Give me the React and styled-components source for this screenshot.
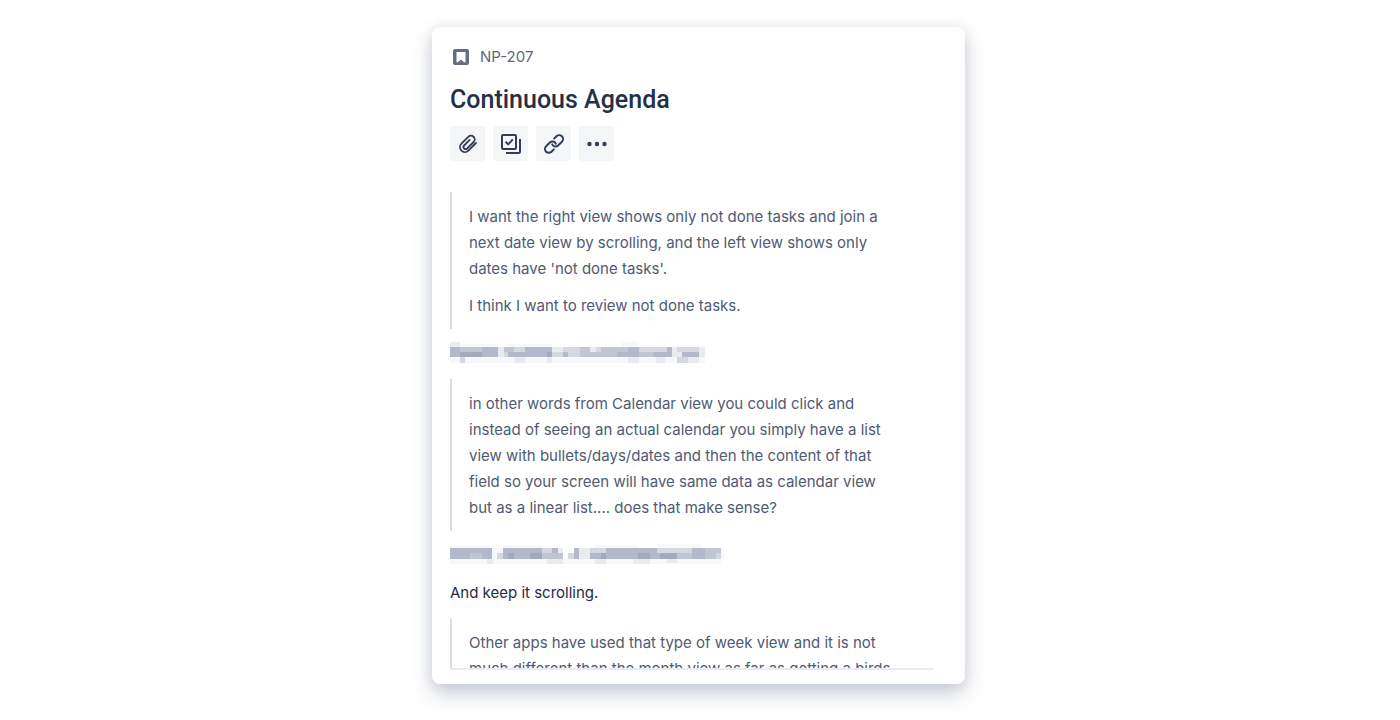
import React from 'react';
import styled, { createGlobalStyle } from 'styled-components';

const GlobalStyle = createGlobalStyle`
  * { box-sizing: border-box; }
  body {
    margin: 0;
    background: #fff;
    color: #1f2a47;
    font-family: Inter, "Liberation Sans", sans-serif;
  }
`;

const Page = styled.main`
  display: flex;
  justify-content: center;
  padding: 27px 3px 36px 0;
`;

const Card = styled.article`
  width: 100%;
  max-width: 533px;
  padding: 17px 31px 14px 18px;
  border-radius: 8px;
  background: #fff;
  box-shadow: 0 10px 20px rgba(23, 43, 77, 0.22), 0 0 14px rgba(23, 43, 77, 0.08);
`;

const IssueKey = styled.a`
  display: flex;
  align-items: center;
  gap: 11px;
  padding-left: 3px;
  color: #5e6780;
  font-size: 15px;
  line-height: 25px;
  text-decoration: none;
`;

const Title = styled.h1`
  margin: 14px 0 10px;
  color: #253048;
  font-family: Roboto, Inter, sans-serif;
  font-size: 25px;
  font-weight: 500;
  line-height: 33px;
`;

const Toolbar = styled.div`
  display: flex;
  gap: 8px;
  margin-bottom: 31px;
`;

const ToolButton = styled.button`
  display: grid;
  place-items: center;
  width: 35px;
  height: 35px;
  padding: 0;
  border: 0;
  border-radius: 3px;
  background: #f5f6f8;
  color: #343d56;
`;

const Description = styled.section`
  max-height: 478px;
  overflow: hidden;
  border-bottom: 2px solid #e9ebee;
`;

const Paragraph = styled.p`
  margin: 0;
  font-size: 15px;
  line-height: 26px;

  & + &, svg + & { margin-top: 11px; }
`;

const Quote = styled.blockquote`
  margin: 12px 0;
  padding: 12px 17px 10px;
  border-left: 2px solid #d9dce2;
  color: #505a73;

  &:first-child { margin-top: 0; }
`;

const Mosaic = styled.svg`
  display: block;
  width: 280px;
  height: 26px;
`;

const SHADES = ['#f7f8fa', '#e9ebef', '#d5d8df', '#c2c6d3', '#b3b8ca', '#a5aabb'];

/* Each tile is [x, y, width, height, shade]. */
const FIRST_NAME = [
  [24, 22, 36, 14, 1], [60, 27, 110, 9, 0], [205, 27, 130, 9, 0], [545, 22, 50, 14, 0],
  [26, 36, 34, 31, 4], [60, 36, 66, 15, 3], [126, 36, 48, 31, 4], [60, 51, 66, 16, 5],
  [174, 36, 17, 31, 1], [191, 36, 31, 15, 3], [191, 51, 14, 16, 2], [205, 51, 50, 16, 4],
  [222, 36, 33, 15, 2], [255, 36, 81, 31, 4], [320, 51, 16, 16, 5], [336, 36, 33, 15, 1],
  [336, 51, 33, 16, 2], [369, 36, 50, 15, 2], [369, 51, 15, 16, 4], [384, 51, 35, 16, 2],
  [419, 36, 31, 15, 3], [450, 36, 18, 15, 1], [419, 51, 65, 16, 3], [468, 36, 15, 15, 2],
  [483, 36, 48, 31, 3], [531, 36, 66, 15, 3], [531, 51, 66, 16, 4], [565, 36, 32, 15, 4],
  [597, 36, 83, 15, 2], [597, 51, 43, 16, 3], [640, 51, 56, 16, 4], [680, 36, 16, 15, 4],
  [696, 36, 16, 15, 1], [696, 51, 30, 16, 1], [712, 36, 14, 15, 2], [726, 36, 51, 15, 2],
  [726, 51, 51, 16, 4], [777, 36, 17, 31, 1],
  [26, 67, 768, 16, 0], [60, 67, 15, 16, 2], [222, 67, 33, 16, 1], [320, 67, 16, 16, 1],
  [565, 67, 32, 16, 1], [648, 67, 28, 16, 1], [712, 67, 32, 16, 2], [744, 67, 33, 16, 1],
];

const SECOND_NAME = [
  [26, 18, 130, 6, 0], [190, 15, 116, 9, 0], [465, 15, 130, 9, 0], [650, 12, 140, 12, 0],
  [27, 24, 129, 33, 4], [90, 40, 35, 17, 3], [156, 24, 33, 33, 0], [172, 40, 18, 17, 2],
  [189, 24, 117, 16, 4], [189, 40, 15, 17, 4], [204, 40, 18, 17, 5], [222, 40, 84, 17, 4],
  [270, 40, 36, 17, 5], [306, 24, 29, 16, 2], [335, 24, 20, 16, 4], [355, 24, 14, 16, 1],
  [306, 40, 63, 17, 3], [385, 40, 17, 17, 2], [402, 24, 15, 33, 4], [417, 24, 33, 33, 1],
  [450, 24, 48, 16, 2], [450, 40, 32, 17, 4], [482, 40, 16, 17, 5], [498, 24, 132, 33, 4],
  [595, 40, 35, 17, 5], [630, 24, 20, 16, 4], [650, 24, 60, 16, 2], [630, 40, 80, 17, 4],
  [660, 40, 50, 17, 5], [710, 24, 45, 16, 2], [710, 40, 133, 17, 3], [755, 24, 40, 33, 4],
  [795, 24, 48, 16, 3], [827, 40, 16, 17, 2], [843, 24, 9, 33, 0],
  [27, 57, 816, 16, 0], [141, 57, 18, 16, 1], [320, 57, 49, 14, 1], [465, 57, 33, 16, 1],
  [580, 57, 50, 14, 1], [680, 57, 30, 12, 1],
];

function HiddenName({ tiles, top }) {
  return (
    <Mosaic viewBox={`30 ${top} 840 78`} overflow="visible" shapeRendering="crispEdges" aria-hidden="true">
      {tiles.map(([x, y, w, h, shade], i) => (
        <rect key={i} x={x} y={y} width={w} height={h} fill={SHADES[shade]} />
      ))}
    </Mosaic>
  );
}

const StoryIcon = () => (
  <svg width="16" height="16" viewBox="0 0 16 16" aria-hidden="true">
    <rect width="16" height="16" rx="2" fill="#656d82" />
    <path d="M3.500 3h9v10.200h-1.500L8 10.400 5 13.200H3.500z" fill="#fff" />
  </svg>
);

const iconProps = {
  width: 24,
  height: 24,
  viewBox: '0 0 24 24',
  fill: 'none',
  stroke: 'currentColor',
  strokeWidth: 2,
  strokeLinecap: 'round',
  strokeLinejoin: 'round',
  'aria-hidden': true,
};

const ClipIcon = () => (
  <svg {...iconProps} strokeWidth="1.8">
    <path d="M20 11l-7.600 7.600a4.900 4.900 0 0 1-7-6.900l6.900-6.900a3.700 3.700 0 0 1 5.300 5.200l-6.500 6.500a2.100 2.100 0 0 1-3-3l5.600-5.600" />
  </svg>
);

const SubtaskIcon = () => (
  <svg {...iconProps} strokeLinecap="butt">
    <rect x="3" y="3" width="14" height="14" rx="1" />
    <path d="M6.600 9.800l2.600 2.600 4.600-5" />
    <path d="M21 7v12.500a1.500 1.500 0 0 1-1.500 1.500H7" />
  </svg>
);

const LinkIcon = () => (
  <svg {...iconProps}>
    <path d="M10.200 12.400a3.800 3.800 0 0 0 5.900 1.100l3.800-3.800a3.800 3.800 0 0 0-5.400-5.400l-2.300 2.300" />
    <path d="M13.800 11.600a3.800 3.800 0 0 0-5.900-1.100l-3.800 3.800a3.800 3.800 0 0 0 5.400 5.400l2.300-2.300" />
  </svg>
);

const MoreIcon = () => (
  <svg {...iconProps} fill="currentColor" stroke="none">
    <circle cx="4.500" cy="12" r="2.200" />
    <circle cx="12" cy="12" r="2.200" />
    <circle cx="19.500" cy="12" r="2.200" />
  </svg>
);

export default function App() {
  return (
    <>
      <GlobalStyle />
      <Page>
        <Card>
          <IssueKey href="#NP-207"><StoryIcon />NP-207</IssueKey>
          <Title>Continuous Agenda</Title>
          <Toolbar>
            <ToolButton type="button" aria-label="Attach"><ClipIcon /></ToolButton>
            <ToolButton type="button" aria-label="Create subtask"><SubtaskIcon /></ToolButton>
            <ToolButton type="button" aria-label="Link issue"><LinkIcon /></ToolButton>
            <ToolButton type="button" aria-label="More actions"><MoreIcon /></ToolButton>
          </Toolbar>
          <Description>
            <Quote>
              <Paragraph>
                I want the right view shows only not done tasks and join a<br />
                next date view by scrolling, and the left view shows only<br />
                dates have 'not done tasks'.
              </Paragraph>
              <Paragraph>I think I want to review not done tasks.</Paragraph>
            </Quote>
            <HiddenName tiles={FIRST_NAME} top={18} />
            <Quote>
              <Paragraph>
                in other words from Calendar view you could click and<br />
                instead of seeing an actual calendar you simply have a list<br />
                view with bullets/days/dates and then the content of that<br />
                field so your screen will have same data as calendar view<br />
                but as a linear list.... does that make sense?
              </Paragraph>
            </Quote>
            <HiddenName tiles={SECOND_NAME} top={9} />
            <Paragraph>And keep it scrolling.</Paragraph>
            <Quote>
              <Paragraph>
                Other apps have used that type of week view and it is not<br />
                much different than the month view as far as getting a birds
              </Paragraph>
            </Quote>
          </Description>
        </Card>
      </Page>
    </>
  );
}
